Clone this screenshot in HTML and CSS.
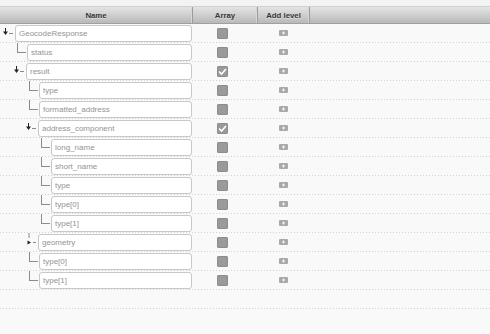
FILE: index.html
```html
<!DOCTYPE html>
<html lang="en">
<head>
    <meta charset="UTF-8">
    <meta name="viewport" content="width=device-width, initial-scale=1.0">
    <title>Schema Tree</title>
    <link rel="stylesheet" href="styles.css">
</head>
<body>
    <div class="tree">
        <div class="head">
            <div class="hcell">Name</div>
            <div class="hcell">Array</div>
            <div class="hcell">Add level</div>
            <div class="hcell last"></div>
        </div>

        <div class="row">
            <div class="col-name lvl0"><svg class="twig" viewBox="0 0 11 18"><line x1="1.5" y1="4" x2="1.5" y2="8" class="stem"/><polygon points="-1,7.5 4,7.5 1.5,11" class="head-tri"/><line x1="5" y1="9.5" x2="9" y2="9.5" class="dash"/></svg><div class="field">GeocodeResponse</div></div>
            <div class="col-arr"><span class="check"></span></div>
            <div class="col-add"><svg class="plus" viewBox="0 0 9 6"><rect width="9" height="6" rx="1"/><path d="M4.5 1.5v3M3 3h3"/></svg></div>
        </div>
        <div class="row">
            <div class="col-name lvl1"><span class="elbow"></span><div class="field">status</div></div>
            <div class="col-arr"><span class="check"></span></div>
            <div class="col-add"><svg class="plus" viewBox="0 0 9 6"><rect width="9" height="6" rx="1"/><path d="M4.5 1.5v3M3 3h3"/></svg></div>
        </div>
        <div class="row">
            <div class="col-name lvl1"><svg class="twig" viewBox="0 0 11 18"><line x1="1.5" y1="4" x2="1.5" y2="8" class="stem"/><polygon points="-1,7.5 4,7.5 1.5,11" class="head-tri"/><line x1="5" y1="9.5" x2="9" y2="9.5" class="dash"/></svg><div class="field">result</div></div>
            <div class="col-arr"><span class="check on"><svg viewBox="0 0 11 11"><path d="M2 5.5l2.5 2.5 4.5-5"/></svg></span></div>
            <div class="col-add"><svg class="plus" viewBox="0 0 9 6"><rect width="9" height="6" rx="1"/><path d="M4.5 1.5v3M3 3h3"/></svg></div>
        </div>
        <div class="row">
            <div class="col-name lvl2"><span class="elbow"></span><div class="field">type</div></div>
            <div class="col-arr"><span class="check"></span></div>
            <div class="col-add"><svg class="plus" viewBox="0 0 9 6"><rect width="9" height="6" rx="1"/><path d="M4.5 1.5v3M3 3h3"/></svg></div>
        </div>
        <div class="row">
            <div class="col-name lvl2"><span class="elbow"></span><div class="field">formatted_address</div></div>
            <div class="col-arr"><span class="check"></span></div>
            <div class="col-add"><svg class="plus" viewBox="0 0 9 6"><rect width="9" height="6" rx="1"/><path d="M4.5 1.5v3M3 3h3"/></svg></div>
        </div>
        <div class="row">
            <div class="col-name lvl2"><svg class="twig" viewBox="0 0 11 18"><line x1="1.5" y1="4" x2="1.5" y2="8" class="stem"/><polygon points="-1,7.5 4,7.5 1.5,11" class="head-tri"/><line x1="5" y1="9.5" x2="9" y2="9.5" class="dash"/></svg><div class="field">address_component</div></div>
            <div class="col-arr"><span class="check on"><svg viewBox="0 0 11 11"><path d="M2 5.5l2.5 2.5 4.5-5"/></svg></span></div>
            <div class="col-add"><svg class="plus" viewBox="0 0 9 6"><rect width="9" height="6" rx="1"/><path d="M4.5 1.5v3M3 3h3"/></svg></div>
        </div>
        <div class="row">
            <div class="col-name lvl3"><span class="elbow"></span><div class="field">long_name</div></div>
            <div class="col-arr"><span class="check"></span></div>
            <div class="col-add"><svg class="plus" viewBox="0 0 9 6"><rect width="9" height="6" rx="1"/><path d="M4.5 1.5v3M3 3h3"/></svg></div>
        </div>
        <div class="row">
            <div class="col-name lvl3"><span class="elbow"></span><div class="field">short_name</div></div>
            <div class="col-arr"><span class="check"></span></div>
            <div class="col-add"><svg class="plus" viewBox="0 0 9 6"><rect width="9" height="6" rx="1"/><path d="M4.5 1.5v3M3 3h3"/></svg></div>
        </div>
        <div class="row">
            <div class="col-name lvl3"><span class="elbow"></span><div class="field">type</div></div>
            <div class="col-arr"><span class="check"></span></div>
            <div class="col-add"><svg class="plus" viewBox="0 0 9 6"><rect width="9" height="6" rx="1"/><path d="M4.5 1.5v3M3 3h3"/></svg></div>
        </div>
        <div class="row">
            <div class="col-name lvl3"><span class="elbow"></span><div class="field">type[0]</div></div>
            <div class="col-arr"><span class="check"></span></div>
            <div class="col-add"><svg class="plus" viewBox="0 0 9 6"><rect width="9" height="6" rx="1"/><path d="M4.5 1.5v3M3 3h3"/></svg></div>
        </div>
        <div class="row">
            <div class="col-name lvl3"><span class="elbow"></span><div class="field">type[1]</div></div>
            <div class="col-arr"><span class="check"></span></div>
            <div class="col-add"><svg class="plus" viewBox="0 0 9 6"><rect width="9" height="6" rx="1"/><path d="M4.5 1.5v3M3 3h3"/></svg></div>
        </div>
        <div class="row">
            <div class="col-name lvl2"><svg class="twig" viewBox="0 0 11 18"><line x1="2" y1="0" x2="2" y2="5" class="dash"/><polygon points="0.5,7.5 4,9.5 0.5,11.5" class="head-tri"/><line x1="6" y1="9.5" x2="9" y2="9.5" class="dash"/></svg><div class="field">geometry</div></div>
            <div class="col-arr"><span class="check"></span></div>
            <div class="col-add"><svg class="plus" viewBox="0 0 9 6"><rect width="9" height="6" rx="1"/><path d="M4.5 1.5v3M3 3h3"/></svg></div>
        </div>
        <div class="row">
            <div class="col-name lvl2"><span class="elbow"></span><div class="field">type[0]</div></div>
            <div class="col-arr"><span class="check"></span></div>
            <div class="col-add"><svg class="plus" viewBox="0 0 9 6"><rect width="9" height="6" rx="1"/><path d="M4.5 1.5v3M3 3h3"/></svg></div>
        </div>
        <div class="row">
            <div class="col-name lvl2"><span class="elbow"></span><div class="field">type[1]</div></div>
            <div class="col-arr"><span class="check"></span></div>
            <div class="col-add"><svg class="plus" viewBox="0 0 9 6"><rect width="9" height="6" rx="1"/><path d="M4.5 1.5v3M3 3h3"/></svg></div>
        </div>
        <div class="row empty"></div>
    </div>
</body>
</html>
```

FILE: styles.css
```css
body {
    margin: 0;
    padding: 0;
    background-color: #f9f9f9;
    font-family: "Liberation Sans", Arial, sans-serif;
    color: #333;
}
.tree {
    padding-top: 7px;
    background: linear-gradient(#f3f3f3, #f3f3f3) top / 100% 7px no-repeat;
}
.head {
    display: grid;
    grid-template-columns: 193px 65px 52px 1fr;
    height: 16px;
    background: linear-gradient(#e4e4e4, #b9b9b9);
    border-top: 1px solid #d0d0d0;
    margin-top: -1px;
    border-bottom: 1px solid #a0a0a0;
}
.hcell {
    display: flex;
    align-items: center;
    justify-content: center;
    white-space: nowrap;
    font-size: 7.8px;
    font-weight: bold;
    color: #353535;
    text-shadow: 0 1px 0 rgba(255, 255, 255, 0.4);
    border-right: 1px solid #9c9c9c;
    box-shadow: inset -1px 0 0 #d8d8d8;
}
.hcell.last {
    border-right: none;
    box-shadow: none;
}
.row {
    display: grid;
    grid-template-columns: 193px 65px 52px 1fr;
    height: 18px;
    padding-bottom: 1px;
    background: linear-gradient(to right, #d2d2d2 1px, transparent 1px) left bottom / 3px 1px repeat-x;
}
.col-name {
    display: flex;
    align-items: flex-start;
}
.lvl0 { padding-left: 4px; }
.lvl1 { padding-left: 15px; }
.lvl2 { padding-left: 27px; }
.lvl3 { padding-left: 39px; }
.twig {
    width: 11px;
    height: 18px;
    flex: none;
    overflow: visible;
}
.twig .stem {
    stroke: #222;
    stroke-width: 1;
}
.twig .head-tri {
    fill: #222;
}
.twig .dash {
    stroke: #8a8a8a;
    stroke-width: 1;
}
.elbow {
    flex: none;
    width: 8px;
    height: 9px;
    margin-left: 2px;
    margin-right: 1px;
    border-left: 1px solid #8c8c8c;
    border-bottom: 1px solid #8c8c8c;
}
.field {
    flex: 1;
    margin-top: 1px;
    height: 15px;
    margin-right: 1px;
    padding-left: 3px;
    background: #fff;
    border: 1px solid #c8c8c8;
    border-radius: 3px;
    font-size: 8px;
    line-height: 15px;
    color: #939393;
}
.col-arr {
    display: flex;
    align-items: center;
    padding-left: 24px;
}
.check {
    width: 11px;
    height: 11px;
    border-radius: 2px;
    background: #9a9a9a;
    box-shadow: inset 0 0 0 1px #8c8c8c;
}
.check svg {
    display: block;
    width: 11px;
    height: 11px;
}
.check svg path {
    fill: none;
    stroke: #fff;
    stroke-width: 1.6;
}
.col-add {
    display: flex;
    align-items: center;
    padding-left: 21px;
}
.plus {
    width: 9px;
    height: 6px;
}
.plus rect {
    fill: #a9a9a9;
}
.plus path {
    stroke: #f4f4f4;
    stroke-width: 1;
}
```
